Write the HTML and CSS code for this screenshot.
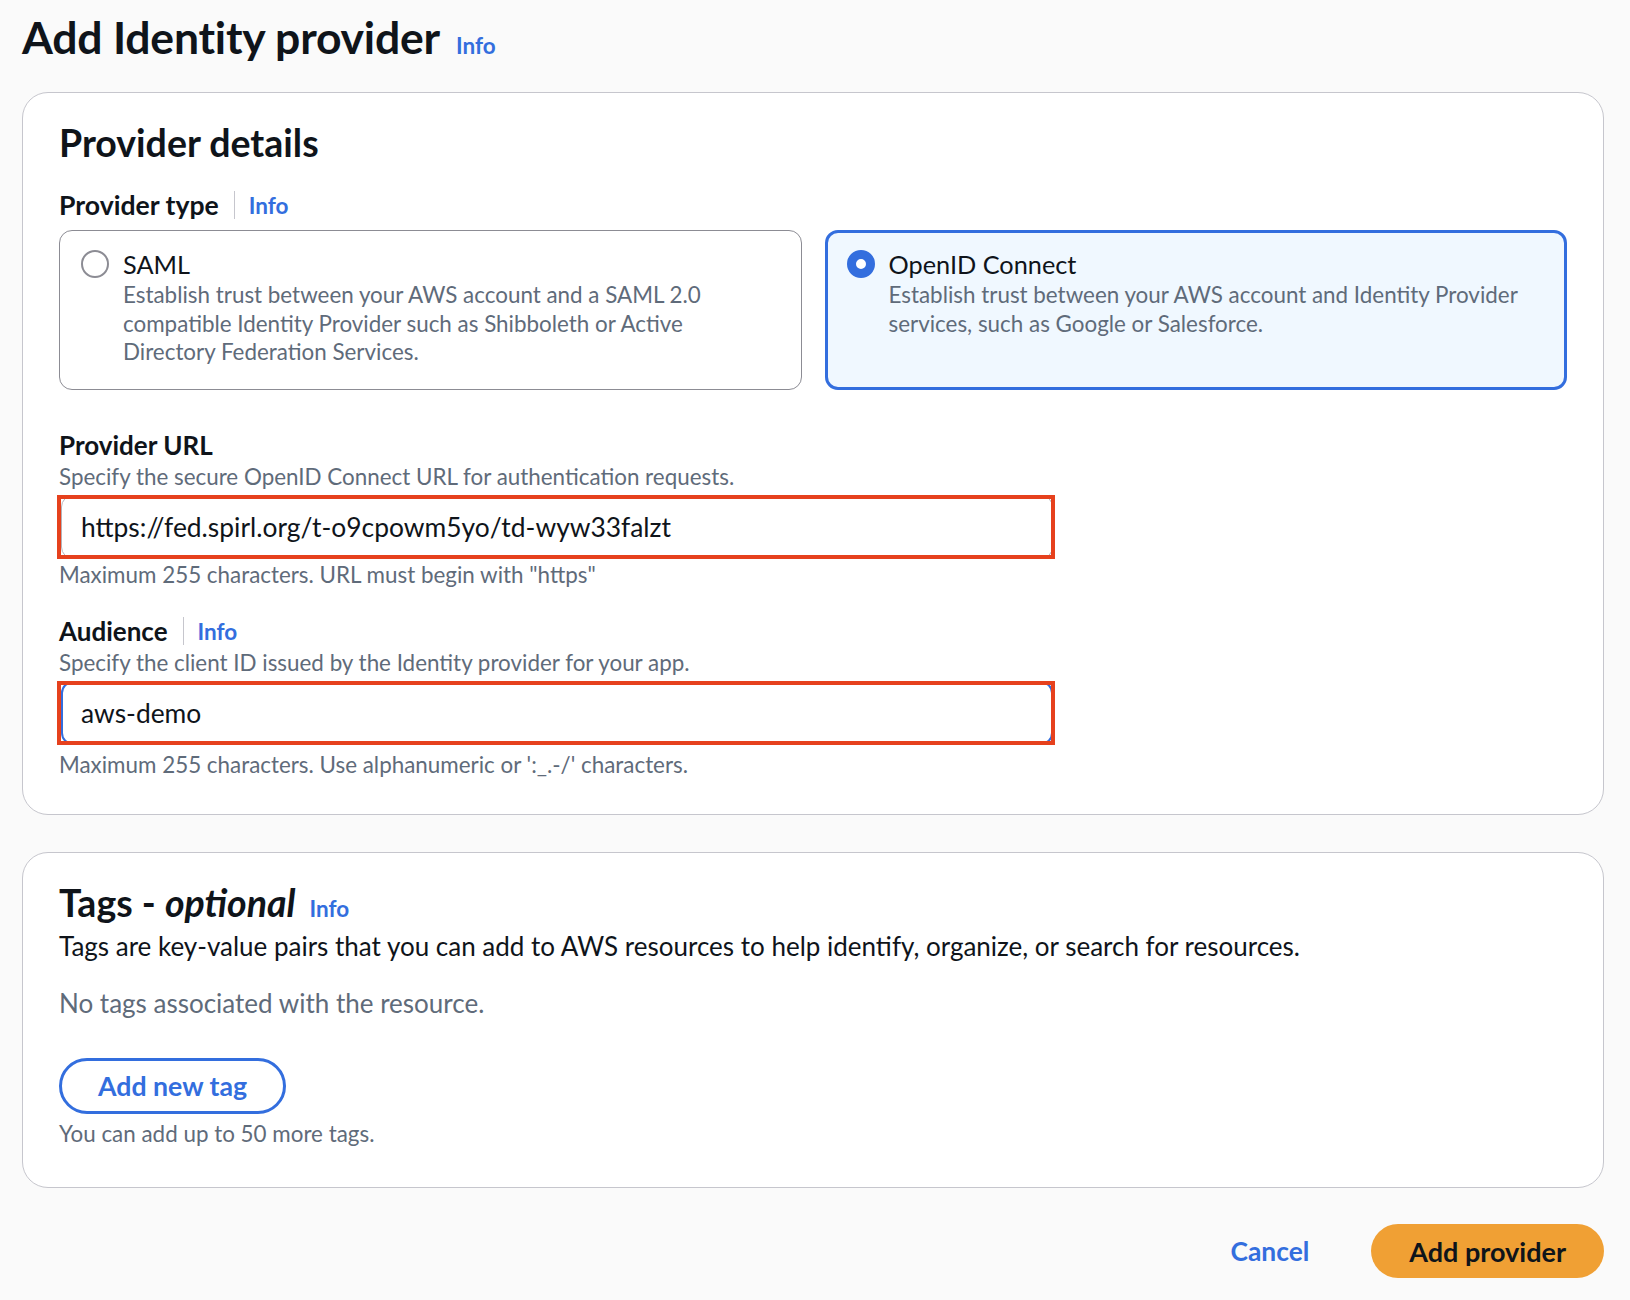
FILE: index.html
```html
<!DOCTYPE html>
<html lang="en">
<head>
<meta charset="utf-8">
<title>Add Identity provider</title>
<link rel="stylesheet" href="styles.css">
</head>
<body>
<div class="page">
  <header class="page-header">
    <h1>Add Identity provider</h1>
    <a class="info info-title">Info</a>
  </header>

  <section class="card details-card">
    <h2>Provider details</h2>

    <div class="field field-type">
      <div class="label-row">
        <span class="label">Provider type</span>
        <span class="divider"></span>
        <a class="info">Info</a>
      </div>
      <div class="tiles">
        <div class="tile">
          <span class="radio"></span>
          <div class="tile-body">
            <div class="tile-title">SAML</div>
            <div class="tile-desc">Establish trust between your AWS account and a SAML 2.0 compatible Identity Provider such as Shibboleth or Active Directory Federation Services.</div>
          </div>
        </div>
        <div class="tile selected">
          <span class="radio checked"></span>
          <div class="tile-body">
            <div class="tile-title">OpenID Connect</div>
            <div class="tile-desc">Establish trust between your AWS account and Identity Provider services, such as Google or Salesforce.</div>
          </div>
        </div>
      </div>
    </div>

    <div class="field field-url">
      <div class="label-row"><span class="label">Provider URL</span></div>
      <div class="desc">Specify the secure OpenID Connect URL for authentication requests.</div>
      <div class="highlight">
        <div class="input">https://fed.spirl.org/t-o9cpowm5yo/td-wyw33falzt</div>
      </div>
      <div class="constraint">Maximum 255 characters. URL must begin with "https"</div>
    </div>

    <div class="field field-aud">
      <div class="label-row">
        <span class="label">Audience</span>
        <span class="divider"></span>
        <a class="info">Info</a>
      </div>
      <div class="desc">Specify the client ID issued by the Identity provider for your app.</div>
      <div class="highlight">
        <div class="input focused">aws-demo</div>
      </div>
      <div class="constraint constraint-last">Maximum 255 characters. Use alphanumeric or ':_.-/' characters.</div>
    </div>
  </section>

  <section class="card tags-card">
    <div class="tags-head">
      <h2>Tags - <i>optional</i></h2>
      <a class="info info-h2">Info</a>
    </div>
    <div class="tags-desc">Tags are key-value pairs that you can add to AWS resources to help identify, organize, or search for resources.</div>
    <div class="empty">No tags associated with the resource.</div>
    <button class="btn-normal">Add new tag</button>
    <div class="constraint">You can add up to 50 more tags.</div>
  </section>

  <footer class="actions">
    <a class="link-btn">Cancel</a>
    <button class="btn-primary">Add provider</button>
  </footer>
</div>
</body>
</html>
```

FILE: styles.css
```css
* { box-sizing: border-box; }

html, body {
  margin: 0;
  padding: 0;
  background: #fafafa;
}

body {
  font-family: "Lato", "Open Sans", sans-serif;
  color: #0f141a;
}

.page {
  padding: 8px 26px 0 22px;
}

.page-header {
  display: flex;
  align-items: baseline;
  gap: 16px;
  height: 84px;
  padding-top: 5px;
}

h1 {
  margin: 0;
  font-size: 44.5px;
  line-height: 48px;
  font-weight: 700;
  letter-spacing: -0.2px;
}

.info {
  color: #336ede;
  font-weight: 700;
  font-size: 22.5px;
  text-decoration: none;
}

.card {
  background: #fff;
  border: 1px solid #c6c6cd;
  border-radius: 26px;
  padding: 28px 36px 36px 36px;
}

.details-card { padding-bottom: 34px; }

h2 {
  margin: 0;
  font-size: 37.5px;
  line-height: 44px;
  font-weight: 700;
}

.field-type { margin-top: 23px; }
.field-url { margin-top: 38px; }
.field-aud { margin-top: 24px; }

.label-row {
  display: flex;
  align-items: center;
  height: 34px;
}

.label {
  font-size: 26px;
  font-weight: 700;
}

.field-type .label { font-size: 26.6px; }

.divider {
  width: 1px;
  height: 28px;
  background: #c6c6cd;
  margin: 0 14px 0 15px;
}

.tiles {
  display: grid;
  grid-template-columns: 1fr 1fr;
  gap: 23px;
  margin-top: 8px;
}

.tile {
  display: flex;
  gap: 14px;
  border: 1px solid #8c8c94;
  border-radius: 13px;
  padding: 18px 20px 20px 21px;
  min-height: 160px;
  background: #fff;
}

.tile.selected {
  border: 3px solid #336ede;
  background: #f0f8ff;
  padding: 16px 18px 18px 19px;
}

.radio {
  flex: none;
  width: 28px;
  height: 28px;
  border-radius: 50%;
  border: 2px solid #8c8c94;
  margin-top: 1px;
  background: #fff;
}

.radio.checked {
  border: 9px solid #336ede;
  background: #fff;
}

.tile-title {
  font-size: 25.3px;
  line-height: 30px;
}

.tile-desc {
  margin-top: 2px;
  font-size: 22.4px;
  line-height: 28.6px;
  color: #5f6b7a;
}

.desc {
  font-size: 22.4px;
  line-height: 30px;
  color: #5f6b7a;
}

.highlight {
  position: relative;
  width: 998px;
  margin-left: -2px;
  margin-top: 3px;
}

.highlight::after {
  content: "";
  position: absolute;
  inset: 0;
  border: 4px solid #e6411d;
  pointer-events: none;
}

.input {
  height: 64px;
  margin: 0 2px 0 4px;
  border: 1px solid #b4b4bb;
  border-radius: 12px;
  padding: 0 19px;
  display: flex;
  align-items: center;
  font-size: 26.4px;
  color: #0f141a;
  background: #fff;
}

.input.focused { border: 2px solid #336ede; padding-left: 18px; }

.constraint {
  font-size: 22.4px;
  line-height: 30px;
  color: #5f6b7a;
  margin-top: 1px;
}

.constraint-last { margin-top: 5px; }

.tags-card {
  margin-top: 37px;
  padding-top: 28px;
  padding-bottom: 38px;
}

.tags-head {
  display: flex;
  align-items: baseline;
  gap: 14px;
}

.tags-head i { font-style: italic; }

.tags-desc {
  font-size: 26px;
  line-height: 34px;
  color: #0f141a;
  margin-top: 4px;
}

.empty {
  font-size: 26px;
  line-height: 34px;
  color: #5f6b7a;
  margin-top: 23px;
}

.tags-card .constraint { margin-top: 5px; }

.btn-normal {
  display: block;
  margin-top: 38px;
  height: 56px;
  padding: 0 36px;
  border: 3px solid #336ede;
  border-radius: 28px;
  background: #fff;
  color: #336ede;
  font-family: inherit;
  font-weight: 700;
  font-size: 26.7px;
}

.actions {
  display: flex;
  justify-content: flex-end;
  align-items: center;
  gap: 62px;
  padding-top: 36px;
}

.link-btn {
  color: #336ede;
  font-weight: 700;
  font-size: 26.4px;
}

.btn-primary {
  height: 54px;
  padding: 0 38px;
  border: none;
  border-radius: 28px;
  background: #f0a034;
  color: #0f141a;
  font-family: inherit;
  font-weight: 700;
  font-size: 27px;
}
```
